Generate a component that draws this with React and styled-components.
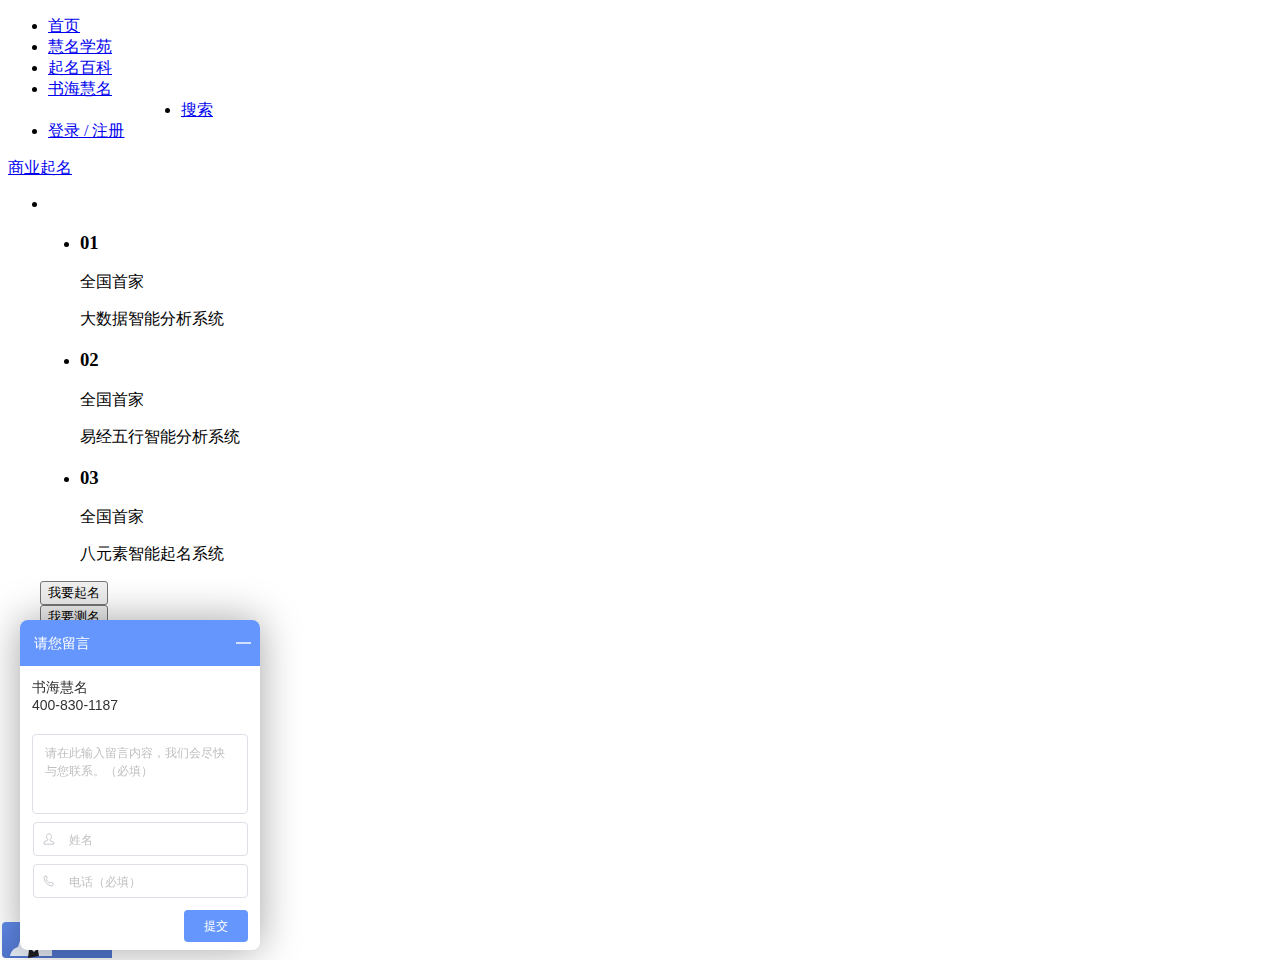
import styled, { createGlobalStyle } from "styled-components";

const navItems = ["首页", "慧名学苑", "起名百科", "书海慧名"];

const features = [
    { no: "01", name: "大数据智能分析系统" },
    { no: "02", name: "易经五行智能分析系统" },
    { no: "03", name: "八元素智能起名系统" },
];

export default function App() {
    return (
        <>
            <GlobalStyle />
            <NavList>
                {navItems.map((item) => (
                    <li key={item}>
                        <a href="#">{item}</a>
                    </li>
                ))}
                <SearchList>
                    <li>
                        <a href="#">搜索</a>
                    </li>
                </SearchList>
                <li>
                    <a href="#">登录 / 注册</a>
                </li>
            </NavList>
            <Paragraph>
                <a href="#">商业起名</a>
            </Paragraph>
            <SlideList>
                <li>
                    &nbsp;
                    <FeatureList>
                        {features.map((feature) => (
                            <li key={feature.no}>
                                <FeatureNo>{feature.no}</FeatureNo>
                                <Paragraph>全国首家</Paragraph>
                                <Paragraph>{feature.name}</Paragraph>
                            </li>
                        ))}
                    </FeatureList>
                </li>
            </SlideList>
            <Actions>
                <ActionButton>我要起名</ActionButton>
                <ActionButton>我要测名</ActionButton>
            </Actions>

            <ChatTab>
                <svg width="110" height="36" viewBox="0 0 110 36">
                    <path
                        d="M8 34c1-5 4-8 8-9 1-4 2-7 4-8 2 3 6 5 12 6 8 1 14 3 18 4v7z"
                        fill="#e6ebf5"
                    />
                    <path d="M26 36l1-8h3l2 2 2-2h2l1 6z" fill="#1d1d22" />
                </svg>
            </ChatTab>

            <MessagePanel>
                <PanelHeader>
                    <span>请您留言</span>
                    <MinimizeBar />
                </PanelHeader>
                <PanelBody>
                    <Company>
                        书海慧名
                        <br />
                        400-830-1187
                    </Company>
                    <MessageBox placeholder="请在此输入留言内容，我们会尽快与您联系。（必填）" />
                    <InputRow>
                        <svg width="12" height="12" viewBox="0 0 12 12" fill="none" stroke="#c4c7cc">
                            <path d="M3.500 3.600C3.500 1.900 4.600.9 6 .9s2.500 1 2.500 2.700c0 1.300-.6 2.300-1.300 2.900v1.200l3.600 1.600v1.900H1.200V8.700l3.600-1.600V6.500C4.100 5.900 3.500 4.900 3.500 3.600z" />
                        </svg>
                        <TextInput placeholder="姓名" />
                    </InputRow>
                    <InputRow>
                        <svg width="12" height="12" viewBox="0 0 12 12" fill="none" stroke="#c4c7cc">
                            <path d="M1.200 1.500L3 .8l1.300 2.500-1 .9c.5 1.700 2 3.300 3.700 4l1-1 2.500 1.500-.8 1.800c-.4.400-1 .500-1.600.400C4.500 10.100 1.800 7.300 1 3.200c-.100-.6-.100-1.200.200-1.700z" />
                        </svg>
                        <TextInput placeholder="电话（必填）" />
                    </InputRow>
                    <SubmitRow>
                        <SubmitButton>提交</SubmitButton>
                    </SubmitRow>
                </PanelBody>
            </MessagePanel>
        </>
    );
}

const GlobalStyle = createGlobalStyle`
    body {
        margin: 0 8px 8px;
        font-family: "Liberation Serif", serif;
        font-size: 16px;
        color: #000;
    }
    a {
        color: #0000ee;
    }
    ul {
        list-style: disc;
    }
`;

const NavList = styled.ul`
    margin: 16px 0;
    padding-left: 40px;
`;

const SearchList = styled.ul`
    margin: 0;
    padding-left: 133px;
`;

const Paragraph = styled.p`
    margin: 16px 0;
`;

const SlideList = styled.ul`
    margin: 16px 0;
    padding-left: 40px;
`;

const FeatureList = styled.ul`
    margin: 0;
    padding-left: 32px;
`;

const FeatureNo = styled.h3`
    margin: 18.72px 0;
    font-size: 18.72px;
    font-weight: bold;
`;

const Actions = styled.div`
    padding-left: 32px;
`;

const ActionButton = styled.button`
    display: block;
    height: 24px;
    padding: 1px 7px;
    border: 1px solid #767676;
    border-radius: 3px;
    background: #efefef;
    color: #000;
    font-family: "Liberation Sans", sans-serif;
    font-size: 13.33px;
`;

const ChatTab = styled.div`
    position: fixed;
    left: 2px;
    bottom: 2px;
    width: 110px;
    height: 36px;
    overflow: hidden;
    border-radius: 4px 0 0 4px;
    background: linear-gradient(180deg, #628cec, #5175cc);
    line-height: 0;
`;

const MessagePanel = styled.div`
    position: fixed;
    left: 20px;
    top: 620px;
    width: 240px;
    height: 330px;
    overflow: hidden;
    border-radius: 8px;
    background: #fff;
    box-shadow: 0 0 40px rgba(0, 0, 0, 0.36);
    font-family: "Liberation Sans", sans-serif;
`;

const PanelHeader = styled.div`
    display: flex;
    align-items: center;
    justify-content: space-between;
    height: 46px;
    padding: 1px 9px 0 14px;
    box-sizing: border-box;
    background: #6596fd;
    color: #fff;
    font-size: 14px;
`;

const MinimizeBar = styled.i`
    width: 15px;
    height: 2px;
    margin-top: -1px;
    background: rgba(255, 255, 255, 0.7);
`;

const PanelBody = styled.div`
    display: flex;
    flex-direction: column;
    padding: 12px 12px 0;
`;

const Company = styled.div`
    margin-bottom: 20px;
    color: #333;
    font-size: 14px;
    line-height: 18px;
`;

const MessageBox = styled.textarea`
    box-sizing: border-box;
    width: 216px;
    height: 80px;
    margin: 0 0 8px;
    padding: 9px 12px;
    border: 1px solid #dcdfe6;
    border-radius: 4px;
    outline: none;
    resize: none;
    font-family: inherit;
    font-size: 12px;
    line-height: 18px;

    &::placeholder {
        color: #c0c0c0;
    }
`;

const InputRow = styled.label`
    box-sizing: border-box;
    display: flex;
    align-items: center;
    gap: 14px;
    width: 215px;
    height: 34px;
    margin: 0 0 8px 1px;
    padding-left: 9px;
    border: 1px solid #dcdfe6;
    border-radius: 4px;
`;

const TextInput = styled.input`
    flex: 1;
    min-width: 0;
    padding: 1px 0 0;
    border: 0;
    outline: none;
    font-family: inherit;
    font-size: 12px;

    &::placeholder {
        color: #c0c0c0;
    }
`;

const SubmitRow = styled.div`
    display: flex;
    justify-content: flex-end;
    margin-top: 4px;
`;

const SubmitButton = styled.button`
    width: 64px;
    height: 32px;
    border: 0;
    border-radius: 4px;
    background: #6596fd;
    color: #fff;
    font-family: inherit;
    font-size: 12px;
`;
